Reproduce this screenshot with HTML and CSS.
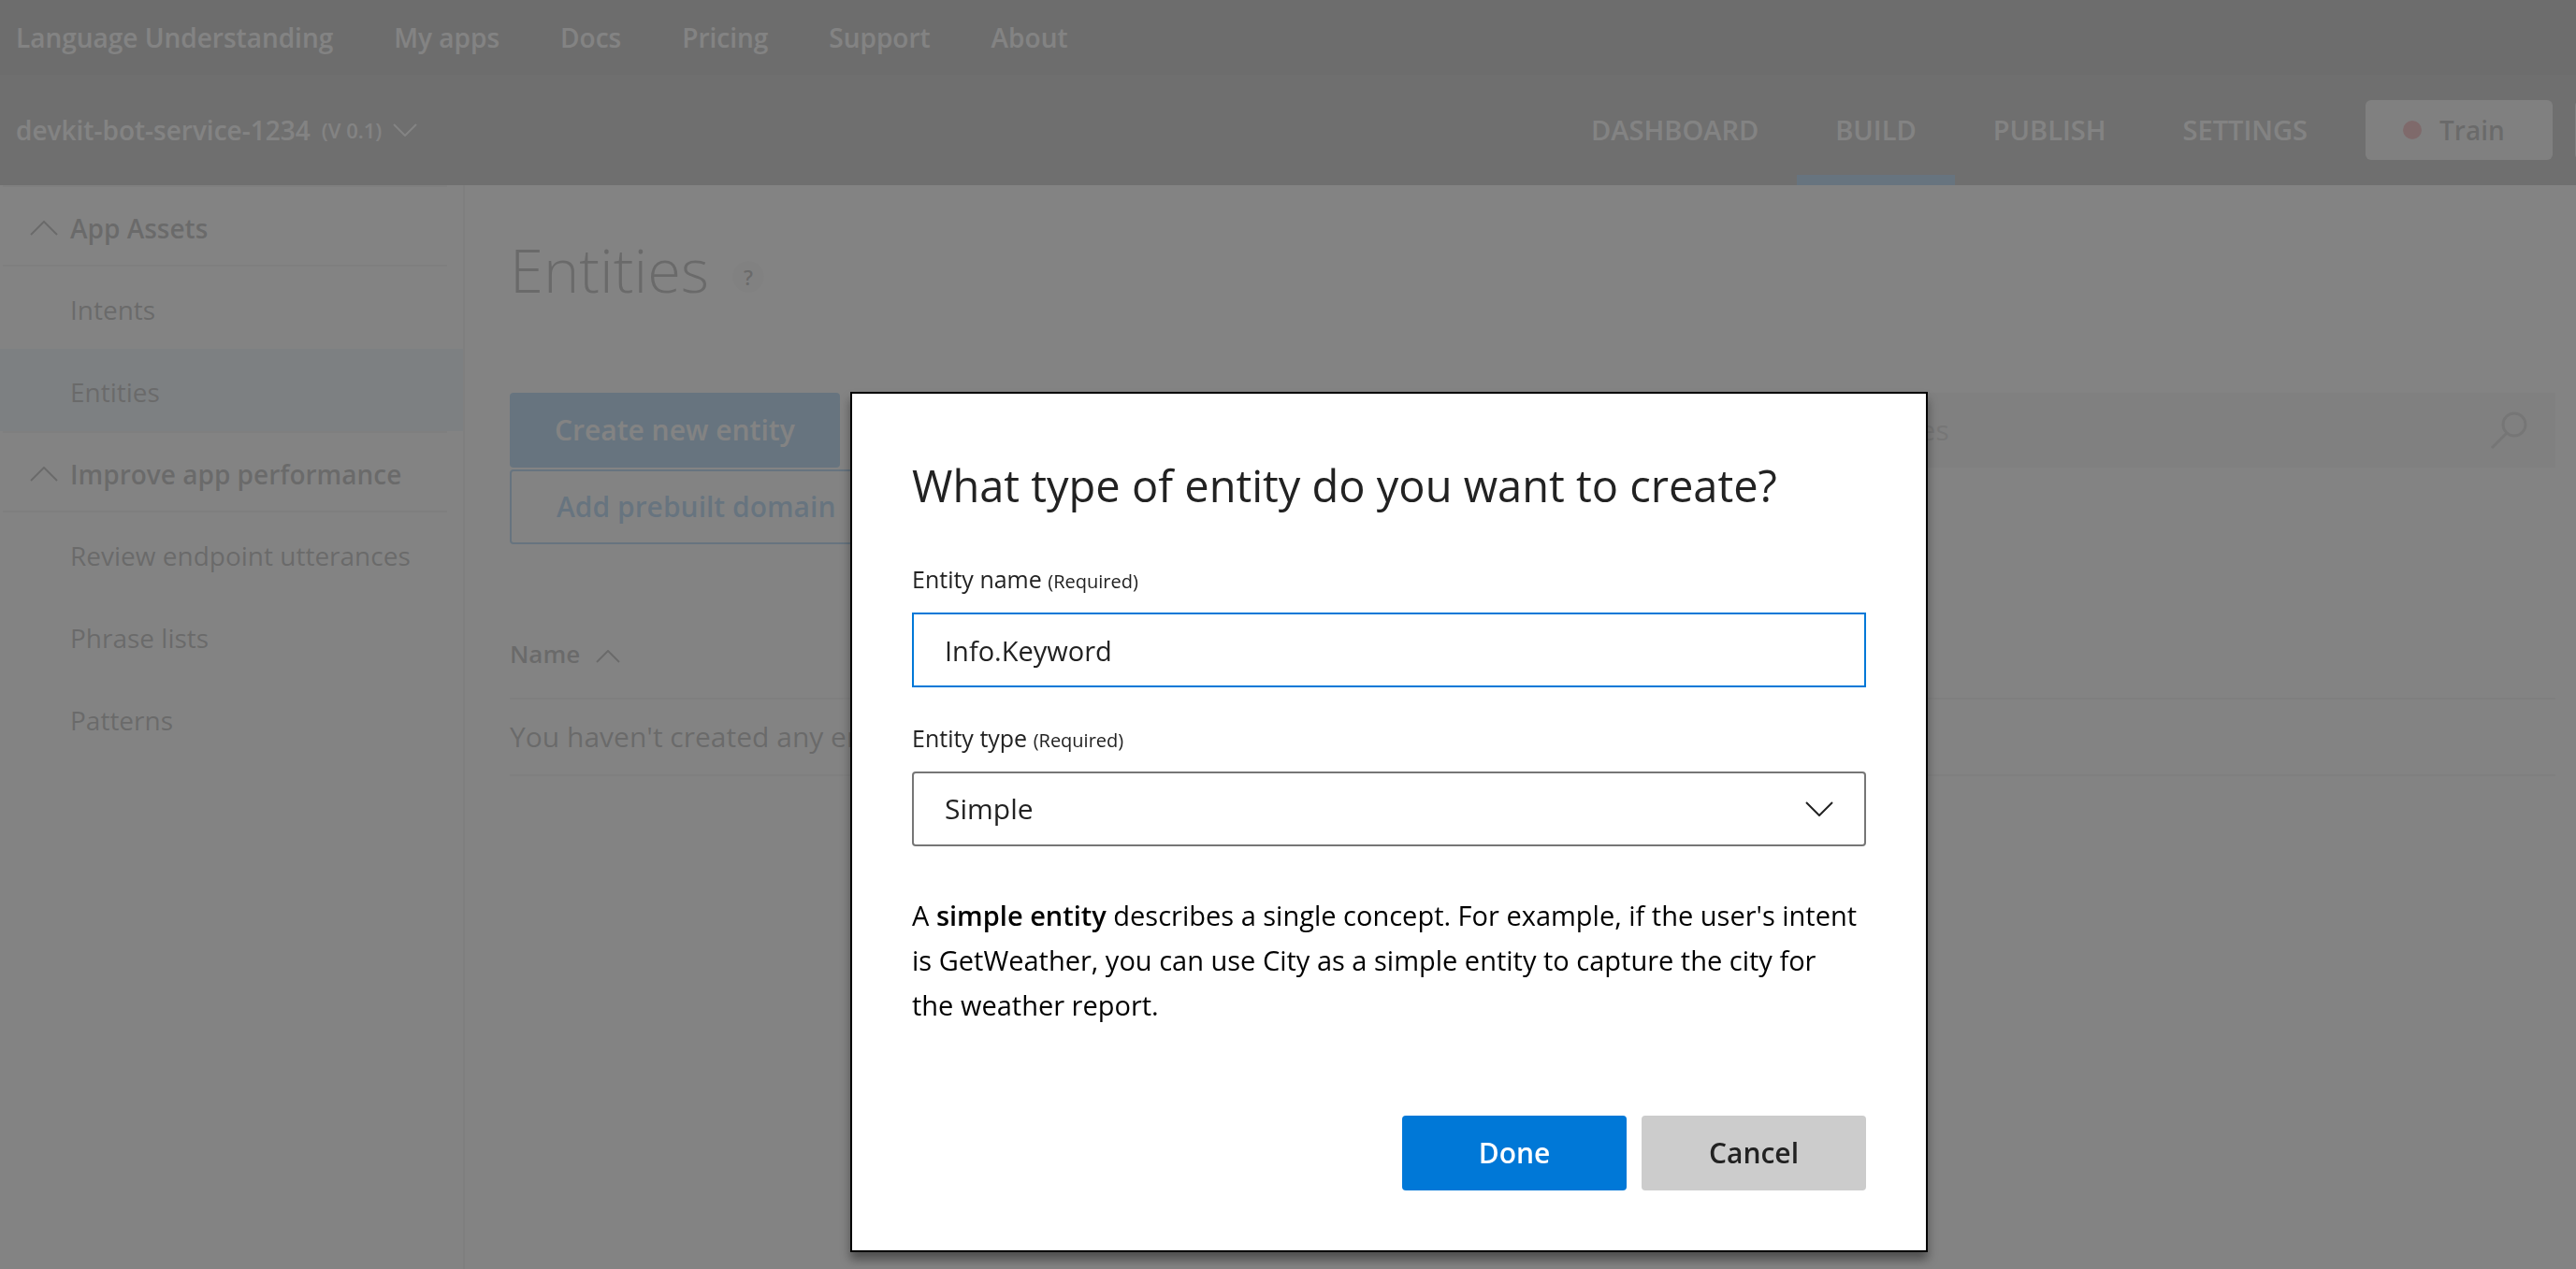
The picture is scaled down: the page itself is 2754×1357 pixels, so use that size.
FILE: index.html
```html
<!DOCTYPE html>
<html lang="en">
<head>
<meta charset="utf-8">
<title>Entities - Language Understanding</title>
<link rel="stylesheet" href="styles.css">
</head>
<body>
<div class="page">
  <header>
    <nav class="topbar" aria-label="Site">
      <a href="#">Language Understanding</a>
      <a href="#">My apps</a>
      <a href="#">Docs</a>
      <a href="#">Pricing</a>
      <a href="#">Support</a>
      <a href="#">About</a>
    </nav>
    <div class="appbar">
      <button class="app-switch" type="button">devkit-bot-service-1234 <small>(V 0.1)</small>
        <svg class="chevron" viewBox="0 0 26 14" width="26" height="14"><path d="M1 1l12 12L25 1"/></svg>
      </button>
      <nav class="tabs" aria-label="App">
        <a href="#">DASHBOARD</a>
        <a href="#" class="active">BUILD</a>
        <a href="#">PUBLISH</a>
        <a href="#">SETTINGS</a>
      </nav>
      <div class="actions">
        <button class="action" type="button"><span class="dot"></span>Train</button>
        <button class="action" type="button" aria-label="Test"></button>
      </div>
    </div>
  </header>
  <div class="body">
    <aside class="sidebar">
      <h2><svg class="chevron" viewBox="0 0 30 16" width="30" height="16"><path d="M1 15L15 1l14 14"/></svg>App Assets</h2>
      <a href="#">Intents</a>
      <a href="#" class="selected">Entities</a>
      <h2><svg class="chevron" viewBox="0 0 30 16" width="30" height="16"><path d="M1 15L15 1l14 14"/></svg>Improve app performance</h2>
      <a href="#">Review endpoint utterances</a>
      <a href="#">Phrase lists</a>
      <a href="#">Patterns</a>
    </aside>
    <main>
      <div class="heading">
        <h1>Entities</h1>
        <button class="help" type="button" aria-label="Help">?</button>
      </div>
      <div class="toolbar">
        <div class="buttons">
          <button class="btn primary" type="button">Create new entity</button>
          <button class="btn outline" type="button">Add prebuilt domain</button>
        </div>
        <label class="search">
          <input type="text" placeholder="Search entities" aria-label="Search entities">
          <svg viewBox="0 0 40 40" width="40" height="40"><circle cx="26" cy="14" r="12"/><path d="M18 23L2 39"/></svg>
        </label>
      </div>
      <table>
        <thead><tr>
          <th>Name <svg class="chevron" viewBox="0 0 26 14" width="26" height="14"><path d="M1 13L13 1l12 12"/></svg></th>
        </tr></thead>
        <tbody><tr><td>You haven't created any entities yet.</td></tr></tbody>
      </table>
    </main>
  </div>
</div>
<div class="overlay">
  <form class="dialog" role="dialog" aria-labelledby="dialog-title">
    <h2 id="dialog-title">What type of entity do you want to create?</h2>
    <label for="entity-name">Entity name <small>(Required)</small></label>
    <input id="entity-name" type="text" value="Info.Keyword">
    <label for="entity-type">Entity type <small>(Required)</small></label>
    <div class="select">
      <select id="entity-type"><option>Simple</option></select>
      <svg class="chevron" viewBox="0 0 30 16" width="30" height="16"><path d="M1 1l14 14L29 1"/></svg>
    </div>
    <p>A <b>simple entity</b> describes a single concept. For example, if the user's intent is GetWeather, you can use City as a simple entity to capture the city for the weather report.</p>
    <div class="dialog-actions">
      <button class="btn done" type="button">Done</button>
      <button class="btn cancel" type="button">Cancel</button>
    </div>
  </form>
</div>
</body>
</html>
```
FILE: styles.css
```css
* { box-sizing: border-box; }
body {
  margin: 0;
  overflow: hidden;
  font-family: "Open Sans", "Noto Sans", sans-serif;
  font-size: 28px;
  line-height: 40px;
  color: #222;
  background: #fff;
}
a { color: inherit; text-decoration: none; }
button, input, select { font: inherit; color: inherit; margin: 0; }
h1, h2, p { margin: 0; }
.chevron { fill: none; stroke: currentColor; stroke-width: 2; flex: none; }

.page { min-height: 100vh; display: flex; flex-direction: column; }
.topbar {
  display: flex;
  align-items: center;
  gap: 65px;
  height: 80px;
  padding: 0 17px;
  background: #383838;
  color: #fff;
  font-weight: 600;
}
.appbar {
  display: flex;
  align-items: stretch;
  height: 118px;
  padding-left: 17px;
  background: #484848;
  color: #fff;
  font-weight: 600;
}
.app-switch {
  display: flex;
  align-items: center;
  gap: 12px;
  margin-right: auto;
  padding: 0;
  border: 0;
  background: none;
}
.app-switch small { font-size: 22px; }
.tabs { display: flex; font-size: 29px; }
.tabs a {
  display: flex;
  align-items: center;
  padding: 0 41px;
  border-top: 11px solid transparent;
  border-bottom: 11px solid transparent;
}
.tabs .active { border-bottom-color: #0078d7; }
.actions { display: flex; align-items: center; gap: 24px; margin-left: 21px; width: 225px; overflow: hidden; }
.action {
  flex: none;
  display: flex;
  align-items: center;
  gap: 19px;
  width: 200px;
  height: 64px;
  padding: 0 40px;
  border: 0;
  border-radius: 6px;
  background: #e4e4e4;
  color: #222;
}
.dot { width: 20px; height: 20px; border-radius: 50%; background: #d8202c; }

.body { flex: 1; display: flex; }
.sidebar { width: 497px; border-right: 2px solid #dcdcdc; flex: none; }
.sidebar h2 {
  display: flex;
  align-items: center;
  gap: 13px;
  height: 87px;
  margin: 0 17px 0 3px;
  padding: 4px 0 0 29px;
  border-top: 2px solid #dcdcdc;
  border-bottom: 2px solid #dcdcdc;
  font-size: 28px;
  font-weight: 600;
}
.sidebar a { display: flex; align-items: center; height: 88px; padding: 4px 0 0 75px; }
.sidebar .selected { background: #c7e0f4; }

main { flex: 1; padding: 50px 22px 0 48px; }
.heading { display: flex; align-items: center; gap: 25px; height: 80px; }
h1 { font-size: 65px; line-height: 80px; font-weight: 300; }
.help {
  width: 34px;
  height: 34px;
  margin-top: 16px;
  padding: 0;
  border: 0;
  border-radius: 50%;
  background: #eee;
  font-size: 22px;
  line-height: 34px;
  font-weight: 600;
}
.toolbar { display: flex; justify-content: space-between; margin-top: 92px; font-size: 30px; }
.buttons { display: flex; flex-direction: column; align-items: flex-start; gap: 2px; }
.btn { height: 80px; padding: 0 48px; border: 0; border-radius: 4px; font-size: 30px; font-weight: 600; }
.primary { background: #0078d7; color: #fff; }
.outline { border: 2px solid #0078d7; background: #fff; color: #0078d7; }
.search { display: flex; align-items: center; width: 900px; height: 80px; padding: 0 30px 0 46px; background: #dfdfdf; }
.search input { flex: 1; padding: 0; border: 0; background: none; outline: 0; }
.search input::placeholder { color: #888; opacity: 1; }
.search svg { fill: none; stroke: #888; stroke-width: 3; }
table { width: 100%; margin-top: 82px; border-collapse: collapse; }
th { height: 83px; padding: 0 0 12px; border-bottom: 2px solid #dcdcdc; text-align: left; font-size: 26px; font-weight: 600; }
th .chevron { margin-left: 10px; }
td { height: 82px; padding: 0; border-bottom: 2px solid #dcdcdc; font-size: 30px; }

.overlay {
  position: fixed;
  inset: 0;
  display: flex;
  justify-content: center;
  align-items: flex-start;
  padding: 419px 0 0 216px;
  background: rgba(116, 116, 116, 0.89);
}
.dialog {
  display: flex;
  flex-direction: column;
  width: 1152px;
  padding: 66px 64px 64px;
  border: 2px solid #000;
  background: #fff;
  box-shadow: 0 8px 10px rgba(0, 0, 0, 0.4);
}
.dialog h2 { margin-bottom: 14px; font-size: 47px; line-height: 64px; font-weight: 400; }
.dialog label { margin-top: 36px; font-size: 25px; line-height: 36px; }
.dialog label small { font-size: 20px; line-height: 20px; }
.dialog input, .dialog select { width: 100%; height: 80px; padding: 0 33px; background: #fff; outline: 0; }
.dialog input { margin-top: 18px; border: 2px solid #0078d7; font-size: 29px; }
.select { display: flex; align-items: center; margin-top: 18px; }
.select select { appearance: none; border: 2px solid #767676; border-radius: 4px; font-size: 30px; }
.select .chevron { margin-left: -65px; pointer-events: none; }
.dialog p { margin-top: 50px; padding-right: 8px; font-size: 29px; line-height: 48px; color: #000; }
.dialog b { font-weight: 600; }
.dialog-actions { display: flex; justify-content: flex-end; gap: 16px; margin-top: 94px; }
.dialog-actions .btn { width: 240px; }
.done { background: #0078d7; color: #fff; }
.cancel { background: #ccc; }
```
